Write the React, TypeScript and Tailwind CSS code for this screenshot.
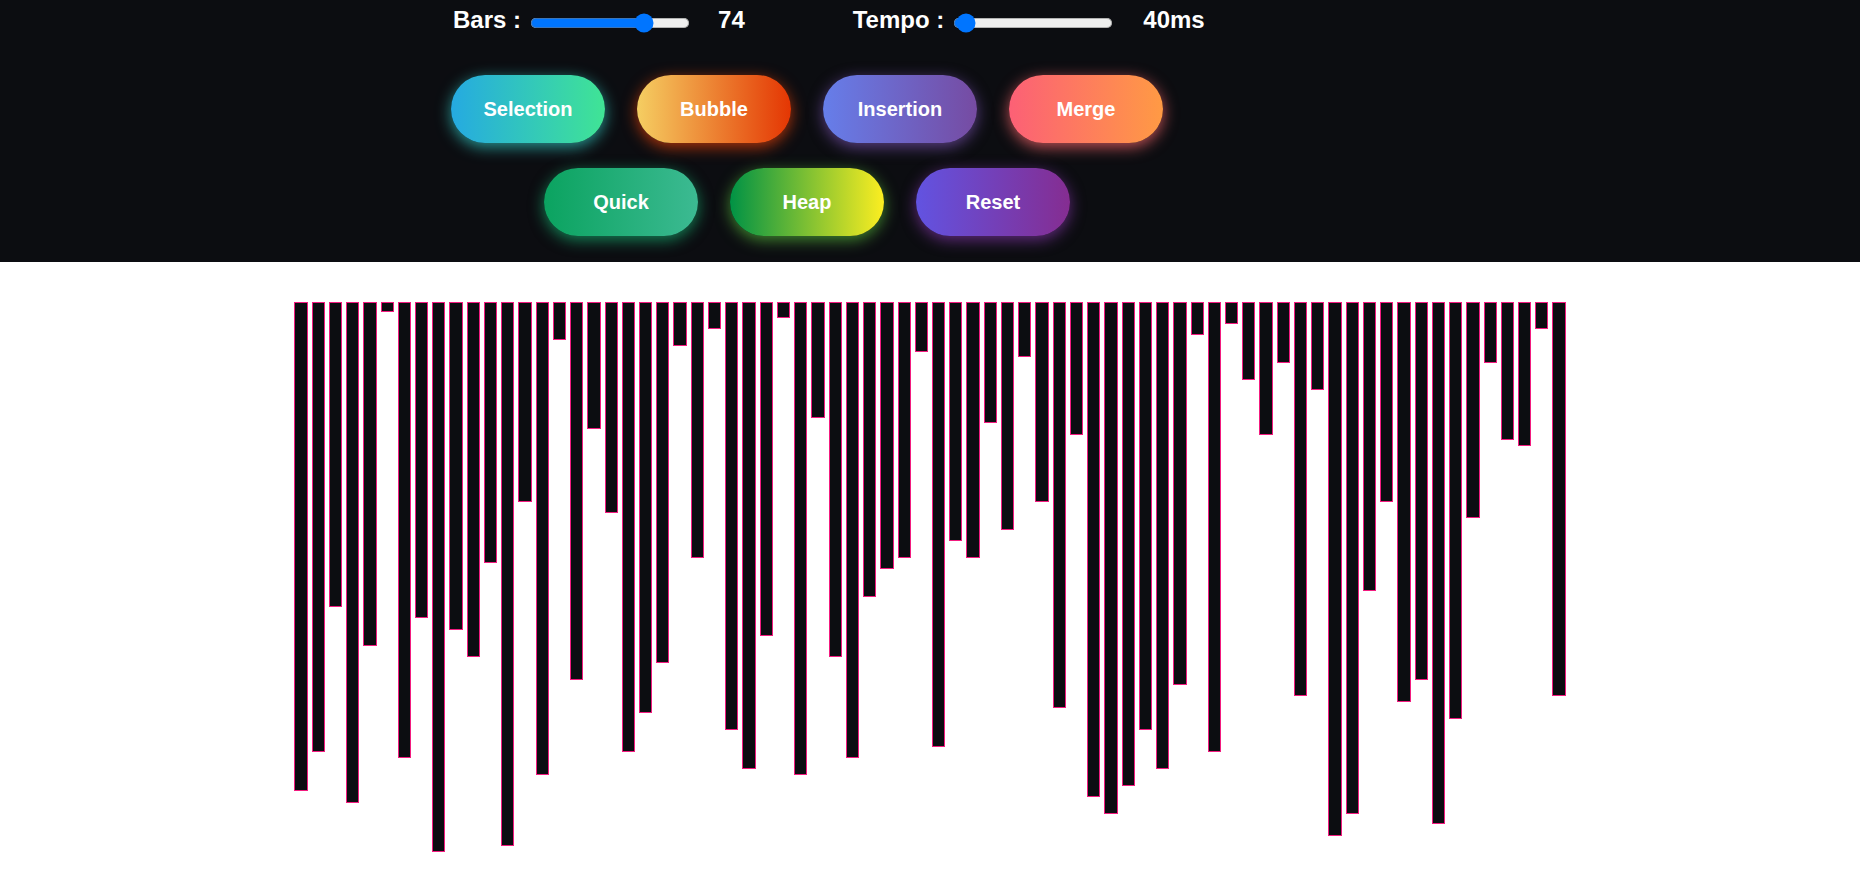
import React from "react";

const BARS = [
  489, 450, 305, 501, 344, 10, 456, 316, 550, 328, 355, 261, 544, 200, 473, 38,
  378, 127, 211, 450, 411, 361, 44, 256, 27, 428, 467, 334, 16, 473, 116, 355,
  456, 295, 267, 256, 50, 445, 239, 256, 121, 228, 55, 200, 406, 133, 495, 512,
  484, 428, 467, 383, 33, 450, 22, 78, 133, 61, 394, 88, 534, 512, 289, 200,
  400, 378, 522, 417, 216, 61, 138, 144, 27, 394,
];

const BUTTONS = [
  {
    label: "Selection",
    cls: "from-[#25aae1] to-[#40e495] shadow-[0_4px_15px_0_rgba(49,196,190,0.75)]",
  },
  {
    label: "Bubble",
    cls: "from-[#f5ce62] to-[#e43603] shadow-[0_4px_15px_0_rgba(229,66,10,0.75)]",
  },
  {
    label: "Insertion",
    cls: "from-[#667eea] to-[#764ba2] shadow-[0_4px_15px_0_rgba(116,79,168,0.75)]",
  },
  {
    label: "Merge",
    cls: "from-[#fc6076] to-[#ff9a44] shadow-[0_4px_15px_0_rgba(252,104,110,0.75)]",
  },
  {
    label: "Quick",
    cls: "from-[#0ba360] to-[#3cba92] shadow-[0_4px_15px_0_rgba(23,168,108,0.75)]",
  },
  {
    label: "Heap",
    cls: "from-[#009245] to-[#fcee21] shadow-[0_4px_15px_0_rgba(83,176,57,0.75)]",
  },
  {
    label: "Reset",
    cls: "from-[#6253e1] to-[#852d91] shadow-[0_4px_15px_0_rgba(126,52,161,0.75)]",
  },
];

function Slider({ min, max, value }: { min: number; max: number; value: number }) {
  return (
    <span className="mt-[6px] ml-[9px] flex shrink-0">
      <input
        type="range"
        min={min}
        max={max}
        defaultValue={value}
        className="m-0 w-[128px] [zoom:1.25]"
      />
    </span>
  );
}

export default function App() {
  return (
    <div className="min-h-screen bg-white font-['Liberation_Sans',Arial,sans-serif]">
      {/* Controls */}
      <header className="bg-[#0c0d11] pb-[26px]">
        <div className="ml-[451px] w-[712px]">
          <div className="flex h-[40px] items-center whitespace-nowrap text-[24px] font-bold text-white">
            <span className="ml-[2px] shrink-0">Bars :</span>
            <Slider min={0} max={100} value={74} />
            <span className="ml-[28px] shrink-0">74</span>
            <span className="ml-[108px] shrink-0">Tempo :</span>
            <Slider min={20} max={1000} value={40} />
            <span className="ml-[30px] shrink-0">40ms</span>
          </div>

          <div className="mt-[35px] flex flex-wrap justify-center gap-x-[32px] gap-y-[25px]">
            {BUTTONS.map((b) => (
              <button
                key={b.label}
                className={`flex h-[68px] w-[154px] items-center justify-center rounded-full bg-linear-to-r/srgb text-[20px] font-bold text-white ${b.cls}`}
              >
                {b.label}
              </button>
            ))}
          </div>
        </div>
      </header>

      {/* Bars */}
      <main className="mt-[40px] flex items-start justify-center gap-[4px]">
        {BARS.map((h, i) => (
          <div
            key={i}
            className="w-[13.24px] shrink-0 border border-[#f21b7f] bg-[#0c0d11]"
            style={{ height: h }}
          />
        ))}
      </main>
    </div>
  );
}
